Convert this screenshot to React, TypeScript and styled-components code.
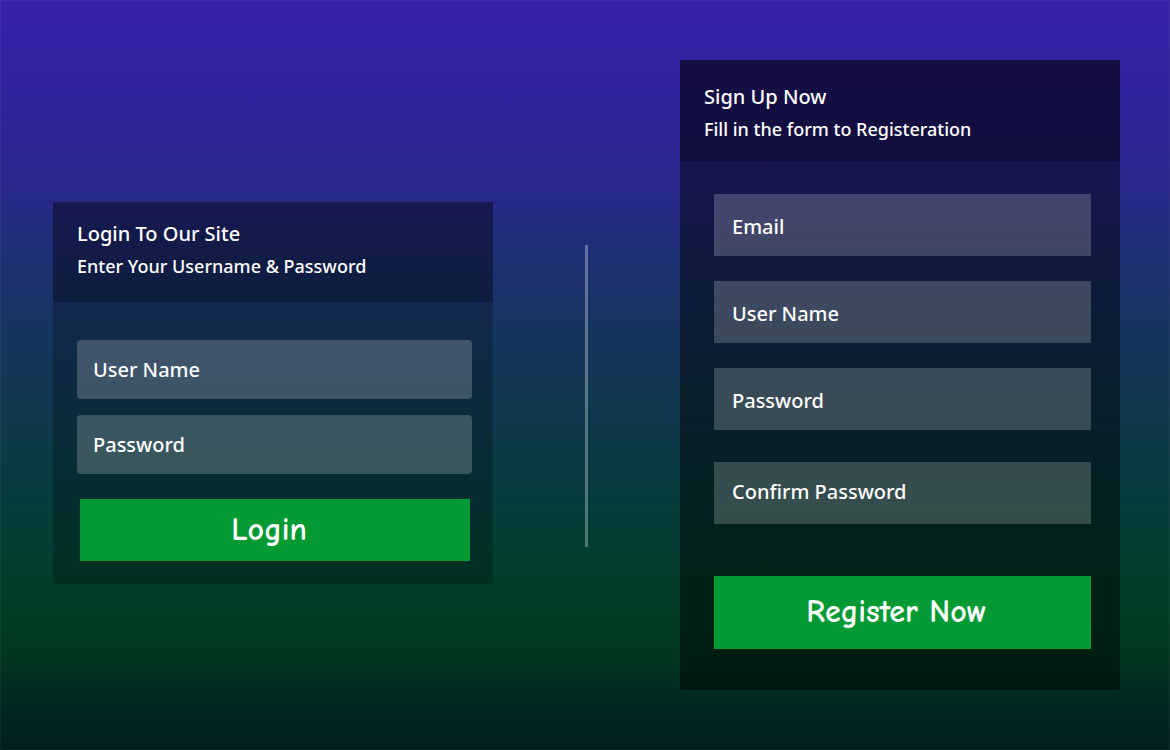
import React from "react";
import styled, { createGlobalStyle } from "styled-components";

const GlobalStyle = createGlobalStyle`
  *, *::before, *::after {
    box-sizing: border-box;
  }

  body {
    margin: 0;
    color: #fff;
    font-family: "Segoe UI", "Noto Sans", sans-serif;
    background: #002021;
  }
`;

const Page = styled.main`
  display: grid;
  grid-template-columns: 440fr 187fr 440fr;
  align-items: start;
  min-height: 100vh;
  padding: 60px 50px 60px 53px;
  box-shadow: inset 0 0 0 1px rgba(255, 255, 255, 0.05);
  background: linear-gradient(
    to bottom,
    #3722a9 0%,
    #2f239d 13%,
    #28288a 25%,
    #1e2f75 34%,
    #16355f 44%,
    #10384f 54%,
    #083b40 64%,
    #033e31 74%,
    #003c24 82%,
    #003720 87%,
    #002c22 92%,
    #002423 96%,
    #001e20 100%
  );
`;

const Card = styled.section<{ $shade: number; $drop?: number }>`
  margin-top: ${(p) => p.$drop ?? 0}px;
  background: rgba(0, 0, 0, ${(p) => p.$shade});
`;

const CardHeader = styled.header`
  padding: 16px 24px 20px;
  background: rgba(0, 0, 0, 0.22);
`;

const SignUpHeader = styled(CardHeader)`
  padding: 21px 24px 16px;
`;

const Title = styled.h1`
  margin: 0;
  font-size: 20px;
  font-weight: 500;
  line-height: 32px;
`;

const Subtitle = styled.p`
  margin: 0;
  font-size: 18px;
  font-weight: 500;
  line-height: 32px;
`;

const LoginForm = styled.form`
  display: flex;
  flex-direction: column;
  gap: 16px;
  padding: 38px 21px 23px 24px;
`;

const SignUpForm = styled.form`
  display: flex;
  flex-direction: column;
  gap: 25px;
  padding: 33px 29px 41px 34px;
`;

const Field = styled.input`
  width: 100%;
  height: 62px;
  padding: 2px 18px 0;
  border: 0;
  outline: 0;
  background: rgba(255, 255, 255, 0.2);
  color: #fff;
  font-family: inherit;
  font-size: 20px;
  font-weight: 500;

  &::placeholder {
    color: #fff;
    opacity: 1;
  }
`;

const RoundedField = styled(Field)`
  height: 59px;
  padding: 0 16px;
  border-radius: 4px;
`;

const ConfirmField = styled(Field)`
  margin-top: 7px;
  padding: 0 18px 4px;
`;

const SubmitButton = styled.button`
  padding: 0 12px 2px 0;
  border: 0;
  background: #039a33;
  color: #fff;
  font-family: "Comic Sans MS", "Comic Neue", cursive;
  font-size: 32px;
  font-weight: 700;
  cursor: pointer;
`;

const LoginButton = styled(SubmitButton)`
  height: 62px;
  margin: 9px 2px 0 3px;
`;

const RegisterButton = styled(SubmitButton)`
  height: 73px;
  margin-top: 27px;
`;

const Divider = styled.div`
  justify-self: center;
  width: 3px;
  height: 302px;
  margin-top: 185px;
  background: rgba(255, 255, 255, 0.3);
`;

export default function App() {
  return (
    <>
      <GlobalStyle />
      <Page>
        <Card $shade={0.22} $drop={142}>
          <CardHeader>
            <Title>Login To Our Site</Title>
            <Subtitle>Enter Your Username &amp; Password</Subtitle>
          </CardHeader>
          <LoginForm>
            <RoundedField type="text" placeholder="User Name" aria-label="User Name" />
            <RoundedField type="password" placeholder="Password" aria-label="Password" />
            <LoginButton type="button">Login</LoginButton>
          </LoginForm>
        </Card>
        <Divider />
        <Card $shade={0.45}>
          <SignUpHeader>
            <Title>Sign Up Now</Title>
            <Subtitle>Fill in the form to Registeration</Subtitle>
          </SignUpHeader>
          <SignUpForm>
            <Field type="email" placeholder="Email" aria-label="Email" />
            <Field type="text" placeholder="User Name" aria-label="User Name" />
            <Field type="password" placeholder="Password" aria-label="Password" />
            <ConfirmField type="password" placeholder="Confirm Password" aria-label="Confirm Password" />
            <RegisterButton type="button">Register Now</RegisterButton>
          </SignUpForm>
        </Card>
      </Page>
    </>
  );
}
